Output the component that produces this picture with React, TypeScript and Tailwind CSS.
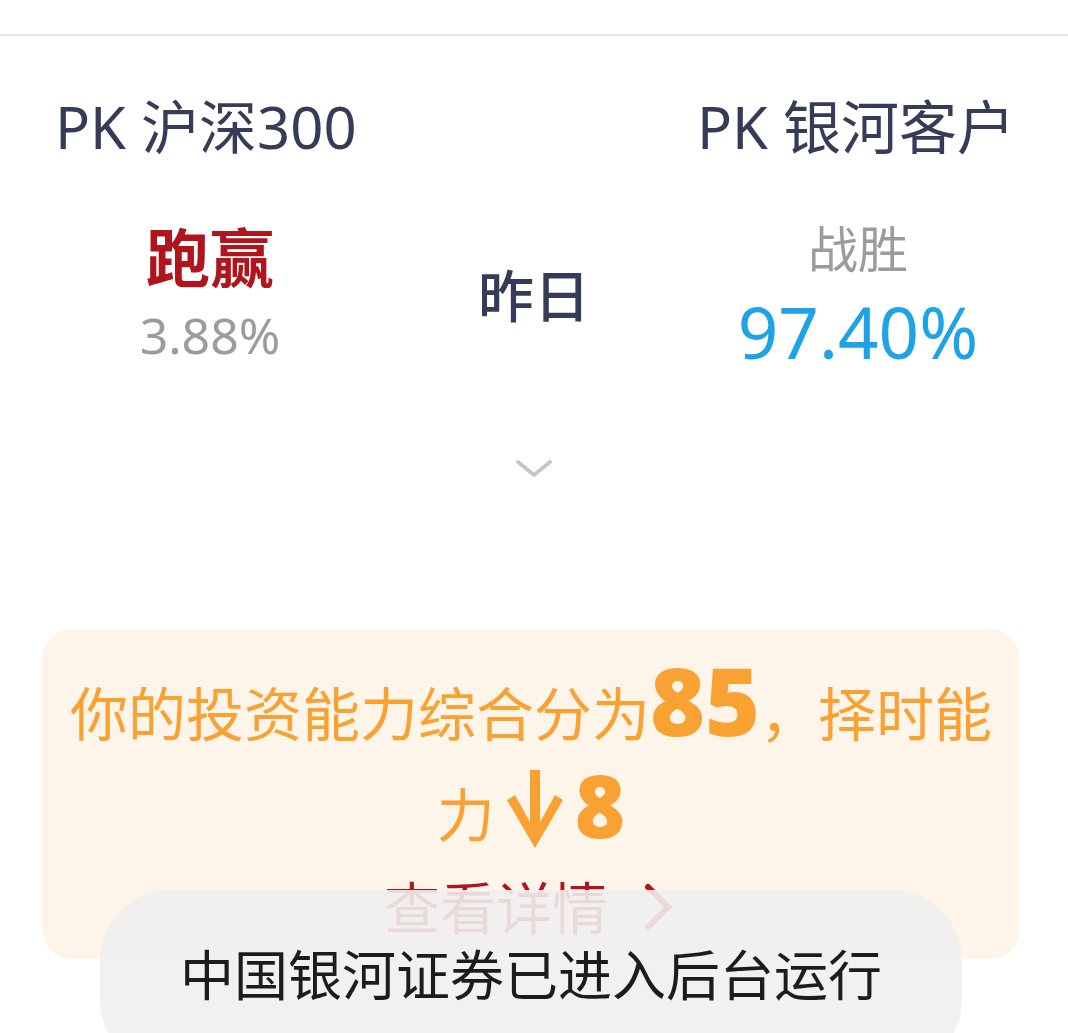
const cjk = { fontFamily: '"Noto Sans", "Noto Sans CJK SC", sans-serif' };

function ChevronDown() {
  return (
    <svg width="38" height="20" viewBox="0 0 38 20" fill="none">
      <path d="M3 3 L19 16 L35 3" stroke="#c6c6cb" strokeWidth="4" strokeLinecap="round" strokeLinejoin="round" />
    </svg>
  );
}

function ArrowDown() {
  return (
    <svg width="60" height="78" viewBox="0 0 60 78" className="mx-[10px] mb-[-4px] self-end">
      <path d="M25 0 H35 V52 L50 25 L58 30 L30 78 L2 30 L10 25 L25 52 Z" fill="#f9a233" />
    </svg>
  );
}

export default function App() {
  return (
    <div className="relative h-[1033px] w-[1068px] overflow-hidden bg-white" style={cjk}>
      <div className="h-[36px] border-b-2 border-[#e4e4e4]" />

      <div className="flex items-center justify-between px-[55px] pt-[62px] text-[58px] leading-none text-[#363c57]">
        <span>PK 沪深300</span>
        <span className="mr-[-2px]">PK 银河客户</span>
      </div>

      <div className="mt-[70px] grid grid-cols-3 px-[48px]">
        <div className="flex flex-col items-center">
          <span className="text-[64px] font-bold leading-none text-[#b0141c]">跑赢</span>
          <span className="mt-[20px] text-[50px] leading-none text-[#9c9c9c]">3.88%</span>
        </div>
        <div className="flex items-center justify-center">
          <span className="mt-[-4px] text-[56px] font-medium leading-none text-[#363c57]">昨日</span>
        </div>
        <div className="flex flex-col items-center">
          <span className="mt-[-2px] text-[50px] leading-none text-[#9c9c9c]">战胜</span>
          <span className="mt-[22px] text-[71px] leading-none text-[#1fa3e7]">97.40%</span>
        </div>
      </div>

      <div className="mt-[92px] flex justify-center">
        <ChevronDown />
      </div>

      <div className="ml-[42px] mr-[48px] mt-[150px] flex h-[330px] flex-col items-center rounded-[30px] bg-[#fdf5ea] pt-[24px]">
        <div className="flex items-end text-[58px] leading-none text-[#f9a233]">
          <span>你的投资能力综合分为</span>
          <span className="mb-[-4px] text-[94px] font-black leading-none">85</span>
          <span>，择时能</span>
        </div>
        <div className="mt-[19px] flex items-end text-[58px] leading-none text-[#f9a233]">
          <span>力</span>
          <ArrowDown />
          <span className="mb-[-4px] text-[86px] font-black leading-none">8</span>
        </div>
        <div className="mt-[35px] flex items-center text-[56px] leading-none text-[#b0141c]">
          <span>查看详情</span>
          <svg width="40" height="50" viewBox="0 0 40 50" className="ml-[30px]">
            <path d="M10 5 L30 25 L10 45" stroke="#b0141c" strokeWidth="6" fill="none" strokeLinecap="round" />
          </svg>
        </div>
      </div>

      <div className="absolute left-[100px] top-[890px] flex h-[180px] w-[862px] justify-center rounded-[70px] bg-[#efefef]/90 pt-[58px]">
        <span className="text-[54px] leading-none text-[#1c1c1c]">中国银河证券已进入后台运行</span>
      </div>
    </div>
  );
}
